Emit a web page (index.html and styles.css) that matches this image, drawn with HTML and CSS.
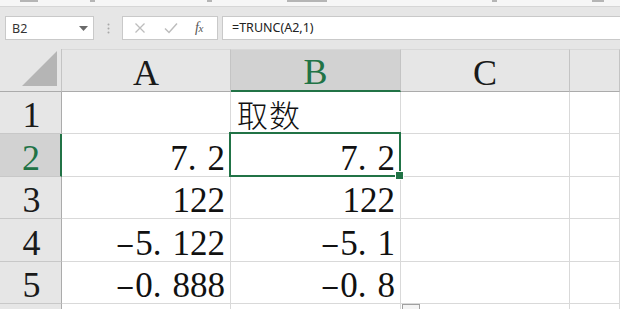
FILE: index.html
```html
<!DOCTYPE html>
<html lang="zh">
<head>
<meta charset="utf-8">
<title>TRUNC</title>
<link rel="stylesheet" href="styles.css">
</head>
<body>
<div class="app">
  <div class="ribbon-edge">
    <span class="frag f1"></span><span class="frag f2"></span><span class="frag f3"></span><span class="frag f4"></span><span class="frag f5"></span><span class="frag f6"></span>
  </div>
  <div class="toolbar">
    <div class="namebox">
      <span class="name">B2</span>
      <svg class="dd" width="9" height="5" viewBox="0 0 9 5"><path d="M0 0H9L4.5 5Z" fill="#6a6a6a"/></svg>
    </div>
    <div class="sep">
      <svg width="3" height="11" viewBox="0 0 3 11"><circle cx="1.5" cy="1.5" r="1" fill="#a8a8a8"/><circle cx="1.5" cy="5.5" r="1" fill="#a8a8a8"/><circle cx="1.5" cy="9.5" r="1" fill="#a8a8a8"/></svg>
    </div>
    <div class="fbtns">
      <svg class="ic" width="12" height="12" viewBox="0 0 12 12"><path d="M1.5 1.5L10.5 10.5M10.5 1.5L1.5 10.5" stroke="#bdbdbd" stroke-width="1.3" fill="none"/></svg>
      <svg class="ic" width="14" height="12" viewBox="0 0 14 12"><path d="M1 6.5L5 10.5L13 1.5" stroke="#bdbdbd" stroke-width="1.5" fill="none"/></svg>
      <span class="fx">f<span class="x">x</span></span>
    </div>
    <div class="finput">=TRUNC(A2,1)</div>
  </div>
  <div class="sheet">
    <div class="corner">
      <svg width="36" height="36" viewBox="0 0 36 36"><path d="M35 0V35H0Z" fill="#b5b5b5"/></svg>
    </div>
    <div class="ch">A</div>
    <div class="ch sel">B</div>
    <div class="ch">C</div>
    <div class="ch last"></div>

    <div class="rh r1">1</div>
    <div class="c"></div>
    <div class="c left cjk">取数</div>
    <div class="c"></div>
    <div class="c last"></div>

    <div class="rh r2 sel">2</div>
    <div class="c">7<span class="dot">.</span>2</div>
    <div class="c active">7<span class="dot">.</span>2</div>
    <div class="c"></div>
    <div class="c last"></div>

    <div class="rh r1">3</div>
    <div class="c">122</div>
    <div class="c">122</div>
    <div class="c"></div>
    <div class="c last"></div>

    <div class="rh r2">4</div>
    <div class="c"><span class="minus">-</span>5<span class="dot">.</span>122</div>
    <div class="c"><span class="minus">-</span>5<span class="dot">.</span>1</div>
    <div class="c"></div>
    <div class="c last"></div>

    <div class="rh r1">5</div>
    <div class="c"><span class="minus">-</span>0<span class="dot">.</span>888</div>
    <div class="c"><span class="minus">-</span>0<span class="dot">.</span>8</div>
    <div class="c"></div>
    <div class="c last"></div>

    <div class="rh"></div>
    <div class="c"></div>
    <div class="c"></div>
    <div class="c"><span class="paste"></span></div>
    <div class="c last"></div>
  </div>
</div>
</body>
</html>
```
FILE: styles.css
```css
* { box-sizing: border-box; }
html, body { margin: 0; padding: 0; }
body { width: 620px; height: 309px; overflow: hidden; background: #fff; }
.app { width: 620px; height: 309px; overflow: hidden; font-family: "Liberation Serif", "Noto Sans CJK SC", serif; }

.ribbon-edge {
  height: 7px;
  background: #f6f6f6;
  border-bottom: 1px solid #d6d6d6;
  display: flex;
  align-items: flex-start;
  position: relative;
}
.frag { display: block; height: 2px; background: #8a8a8a; margin-top: 0; opacity: .6; }
.f1 { width: 18px; margin-left: 20px; }
.f2 { width: 5px; margin-left: 52px; }
.f3 { width: 5px; margin-left: 112px; }
.f4 { width: 40px; margin-left: 75px; }
.f5 { width: 5px; margin-left: 165px; }
.f6 { width: 12px; margin-left: 95px; }

.toolbar {
  height: 42px;
  background: #e6e6e6;
  display: flex;
  align-items: flex-start;
  padding-top: 9px;
  font-family: "Noto Sans", "Open Sans", sans-serif;
}
.namebox {
  margin-left: 5px;
  width: 89px;
  height: 24px;
  background: #fff;
  border: 1px solid #c9c9c9;
  display: flex;
  align-items: center;
  justify-content: space-between;
  padding: 0 5px 0 6px;
}
.name { font-size: 12.5px; color: #333; }
.sep { width: 28px; height: 24px; display: flex; align-items: center; justify-content: center; }
.fbtns {
  width: 96px;
  height: 24px;
  background: #fff;
  border: 1px solid #c9c9c9;
  display: flex;
  align-items: center;
  padding-left: 11px;
  gap: 0;
}
.fbtns .ic:first-child { margin-right: 18px; }
.fbtns .ic:nth-child(2) { margin-right: 17px; }
.fx { font-family: "Liberation Serif", serif; font-style: italic; font-size: 14px; color: #555; letter-spacing: -0.5px; }
.fx .x { font-size: 11px; }
.finput {
  margin-left: 4px;
  flex: 1;
  height: 24px;
  background: #fff;
  border: 1px solid #c9c9c9;
  border-right: 0;
  font-size: 12.5px;
  color: #222;
  padding-left: 9px;
  line-height: 22px;
}

.sheet {
  display: grid;
  grid-template-columns: 62px 169px 170px 169px 50px;
  grid-template-rows: 43px 42px 43px 42px 43px 42px 20px;
  font-size: 35px;
  color: #111;
}
.corner {
  background: #e6e6e6;
  border-right: 1px solid #c4c4c4;
  border-bottom: 1px solid #ababab;
  display: flex;
  align-items: flex-end;
  justify-content: flex-end;
  padding: 0 3px 4px 0;
}
.ch {
  background: #e6e6e6;
  border-right: 1px solid #c4c4c4;
  border-bottom: 1px solid #ababab;
  border-top: 1px solid #d8d8d8;
  display: flex;
  align-items: flex-end;
  justify-content: center;
  line-height: 36px;
  font-size: 36px;
  color: #1a1a1a;
}
.ch.sel { background: #d2d2d2; border-bottom: 2px solid #217346; color: #217346; line-height: 35px; }
.rh {
  background: #e6e6e6;
  border-right: 1px solid #ababab;
  border-bottom: 1px solid #c8c8c8;
  display: flex;
  align-items: flex-end;
  justify-content: center;
  line-height: 36px;
  font-size: 36px;
  color: #1a1a1a;
  padding-left: 2px;
}
.rh.sel { background: #d2d2d2; border-right: 2px solid #217346; color: #217346; }
.c {
  border-right: 1px solid #d9d9d9;
  border-bottom: 1px solid #d9d9d9;
  display: flex;
  align-items: flex-end;
  justify-content: flex-end;
  padding-right: 5px;
  line-height: 35px;
  white-space: nowrap;
  position: relative;
}
.c.left { justify-content: flex-start; padding-left: 6px; }
.cjk { font-family: "Noto Sans CJK SC", sans-serif; font-size: 31px; font-weight: 300; line-height: 38px; letter-spacing: 1px; }
.dot { padding-right: 11px; }
.minus { display: inline-block; width: 18px; transform: scale(1.65, 0.75); text-align: center; margin-right: 1px; }
.c.active::after {
  content: "";
  position: absolute;
  left: -2px; top: -2px; right: -1px; bottom: -1px;
  border: 2px solid #217346;
}
.c.active::before {
  content: "";
  position: absolute;
  right: -4px; bottom: -4px;
  width: 7px; height: 7px;
  background: #217346;
  border: 1px solid #fff;
  z-index: 2;
}
.paste {
  position: absolute;
  left: 1px; top: 0;
  width: 18px; height: 10px;
  border: 1px solid #a0a0a0;
  background: #f4f4f4;
}
```
